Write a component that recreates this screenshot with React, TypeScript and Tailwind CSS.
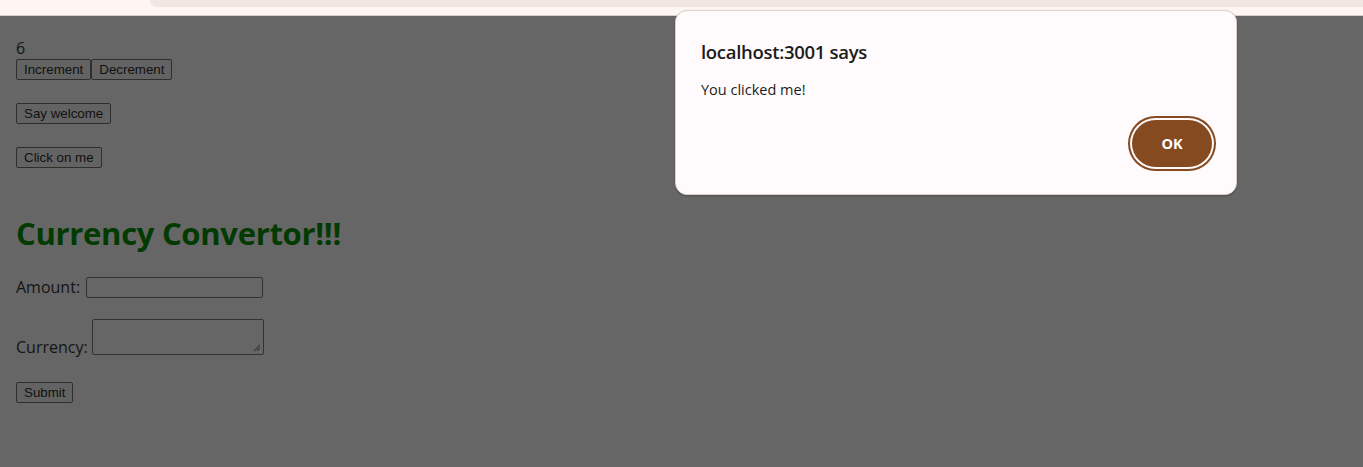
import type { ReactNode } from "react";

const pageFont = { fontFamily: '"Open Sans", "Noto Sans", sans-serif' };

export default function App() {
  return (
    <div className="relative flex h-[467px] w-[1363px] flex-col overflow-hidden">
      <BrowserStrip />
      <main className="flex-1 bg-[#666666] pl-4 pt-[22px] text-[#141414]" style={pageFont}>
        <div className="text-[16px] leading-[21px]">6</div>
        <div className="flex">
          <NativeButton>Increment</NativeButton>
          <NativeButton>Decrement</NativeButton>
        </div>
        <div className="mt-[23px] flex">
          <NativeButton>Say welcome</NativeButton>
        </div>
        <div className="mt-[23px] flex">
          <NativeButton>Click on me</NativeButton>
        </div>

        <h1 className="mt-[44px] text-[31px] font-bold leading-[42px] tracking-[-0.3px] text-[#023a02]">Currency Convertor!!!</h1>

        <form className="mt-[21px] text-[16px]">
          <label className="flex h-[24px] items-center gap-[6px]">
            <span>Amount:</span>
            <input className="h-[21px] w-[177px] rounded-[2px] border border-[#333333] bg-[#666666]" />
          </label>
          <label className="mt-[20px] flex items-end gap-[4px]">
            <span className="leading-[16px]">Currency:</span>
            <span className="relative block h-[36px] w-[172px] rounded-[2px] border border-[#333333]">
              <svg className="absolute bottom-[2px] right-[2px]" width="8" height="8" viewBox="0 0 8 8">
                <path d="M7 1 L1 7 M7 4 L4 7" stroke="#3a3a3a" strokeWidth="1.2" />
              </svg>
            </span>
          </label>
          <div className="mt-[27px] flex">
            <NativeButton>Submit</NativeButton>
          </div>
        </form>
      </main>
      <AlertDialog />
    </div>
  );
}

function BrowserStrip() {
  return (
    <div className="flex h-[16px] border-b border-[#d9cfc9] bg-[#fdf6f3]">
      <div className="w-[150px]" />
      <div className="h-[7px] flex-1 rounded-bl-[12px] bg-[#f2e6e3]" />
    </div>
  );
}

function NativeButton({ children }: { children: ReactNode }) {
  return (
    <button
      type="button"
      className="h-[21px] rounded-[2px] border border-[#2e2e2e] bg-[#636363] px-[7px] text-[13.33px] leading-[15px] text-[#111111]"
      style={{ fontFamily: '"Liberation Sans", Arial, sans-serif' }}
    >
      {children}
    </button>
  );
}

function AlertDialog() {
  return (
    <div
      className="absolute left-[675px] top-[10px] flex h-[185px] w-[562px] flex-col rounded-[12px] border border-[#d8d2c8] bg-[#fffbfd] pl-[25px] pr-[24px] pt-[28px] text-[#1b1b1b] shadow-[0_1px_2px_rgba(0,0,0,0.25)]"
      style={pageFont}
    >
      <div className="text-[18.5px] font-semibold leading-[26px] tracking-[-0.3px]">localhost:3001 says</div>
      <div className="mt-[15px] text-[14.5px] leading-[20px]">You clicked me!</div>
      <div className="mt-[20px] flex justify-end">
        <button
          type="button"
          className="h-[47px] w-[80px] rounded-full bg-[#864a21] text-[14.5px] font-bold text-white ring-2 ring-[#864a21] ring-offset-2 ring-offset-[#fffbfd]"
        >
          OK
        </button>
      </div>
    </div>
  );
}
